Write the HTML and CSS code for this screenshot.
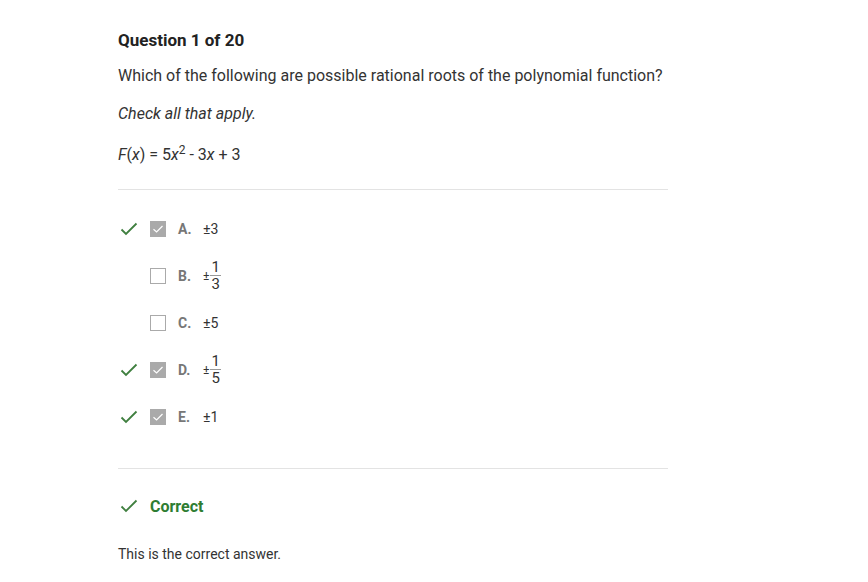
FILE: index.html
```html
<!DOCTYPE html>
<html>
<head>
<meta charset="utf-8">
<link rel="stylesheet" href="styles.css">
</head>
<body>
<div class="page">
  <h1 class="title">Question 1 of 20</h1>
  <p class="prompt">Which of the following are possible rational roots of the polynomial function?</p>
  <p class="hint">Check all that apply.</p>
  <p class="formula"><i>F</i>(<i>x</i>) = 5<i>x</i><sup>2</sup> - 3<i>x</i> + 3</p>
  <hr class="rule first">
  <div class="options">
    <div class="opt">
      <span class="mark"><svg width="18" height="14" viewBox="0 0 18 14"><path d="M1.5 7.5 L6 12 L16.5 1.5" fill="none" stroke="#3f7f3f" stroke-width="1.8"/></svg></span>
      <span class="box checked"><svg width="16" height="16" viewBox="0 0 16 16"><path d="M3.5 8.2 L6.6 11 L12.5 5" fill="none" stroke="#fff" stroke-width="1.2"/></svg></span>
      <span class="letter">A.</span>
      <span class="val">±3</span>
    </div>
    <div class="opt">
      <span class="mark"></span>
      <span class="box"></span>
      <span class="letter">B.</span>
      <span class="val"><span class="pm">±</span><span class="frac"><span class="num">1</span><span class="den">3</span></span></span>
    </div>
    <div class="opt">
      <span class="mark"></span>
      <span class="box"></span>
      <span class="letter">C.</span>
      <span class="val">±5</span>
    </div>
    <div class="opt">
      <span class="mark"><svg width="18" height="14" viewBox="0 0 18 14"><path d="M1.5 7.5 L6 12 L16.5 1.5" fill="none" stroke="#3f7f3f" stroke-width="1.8"/></svg></span>
      <span class="box checked"><svg width="16" height="16" viewBox="0 0 16 16"><path d="M3.5 8.2 L6.6 11 L12.5 5" fill="none" stroke="#fff" stroke-width="1.2"/></svg></span>
      <span class="letter">D.</span>
      <span class="val"><span class="pm">±</span><span class="frac"><span class="num">1</span><span class="den">5</span></span></span>
    </div>
    <div class="opt">
      <span class="mark"><svg width="18" height="14" viewBox="0 0 18 14"><path d="M1.5 7.5 L6 12 L16.5 1.5" fill="none" stroke="#3f7f3f" stroke-width="1.8"/></svg></span>
      <span class="box checked"><svg width="16" height="16" viewBox="0 0 16 16"><path d="M3.5 8.2 L6.6 11 L12.5 5" fill="none" stroke="#fff" stroke-width="1.2"/></svg></span>
      <span class="letter">E.</span>
      <span class="val">±1</span>
    </div>
  </div>
  <hr class="rule second">
  <div class="result">
    <svg width="18" height="14" viewBox="0 0 18 14"><path d="M1.5 7.5 L6 12 L16.5 1.5" fill="none" stroke="#3f7f3f" stroke-width="1.8"/></svg>
    <span>Correct</span>
  </div>
  <p class="explain">This is the correct answer.</p>
</div>
</body>
</html>
```
FILE: styles.css
```css
html, body { margin: 0; padding: 0; background: #fff; }
body { font-family: Roboto, "Liberation Sans", sans-serif; color: #333; }
.page { padding: 30px 0 0 118px; width: 550px; }
.title { margin: 0; font-size: 17px; font-weight: 700; color: #222; line-height: 20px; }
.prompt { margin: 16px 0 0; font-size: 16px; line-height: 19px; color: #333; }
.hint { margin: 19px 0 0; font-size: 16px; line-height: 19px; font-style: italic; color: #333; }
.formula { margin: 22px 0 0; font-size: 16px; line-height: 19px; color: #333; }
.formula sup { font-size: 12px; line-height: 0; vertical-align: 6px; }
.rule { border: 0; border-top: 1px solid #e3e3e3; margin: 0; height: 0; }
.rule.first { margin-top: 25px; }
.rule.second { margin-top: 28px; }
.options { display: flex; flex-direction: column; padding-top: 15px; }
.opt { display: flex; align-items: center; height: 47px; font-size: 14px; }
.mark { width: 32px; display: flex; align-items: center; padding-left: 2px; box-sizing: border-box; }
.box { width: 14px; height: 14px; border: 1px solid #aaa; background: #fff; display: flex; align-items: center; justify-content: center; box-sizing: content-box; }
.box.checked { background: #aaa; border-color: #aaa; }
.box svg { width: 16px; height: 16px; flex: none; }
.letter { margin-left: 12px; width: 25px; font-weight: 700; color: #777; font-size: 14px; }
.val { color: #333; display: flex; align-items: center; }
.pm { font-size: 12px; margin-top: 1px; }
.frac { display: inline-flex; flex-direction: column; align-items: center; margin-left: 1px; font-size: 15px; line-height: 14px; }
.frac .num { border-bottom: 1px solid #999; padding: 0 1px 1px; }
.frac .den { padding-top: 1px; }
.result { display: flex; align-items: center; gap: 12px; margin-top: 27px; padding-left: 2px; height: 20px; font-size: 16px; font-weight: 700; color: #2e7d32; }
.explain { margin: 30px 0 0; font-size: 14px; line-height: 17px; color: #333; }
```
